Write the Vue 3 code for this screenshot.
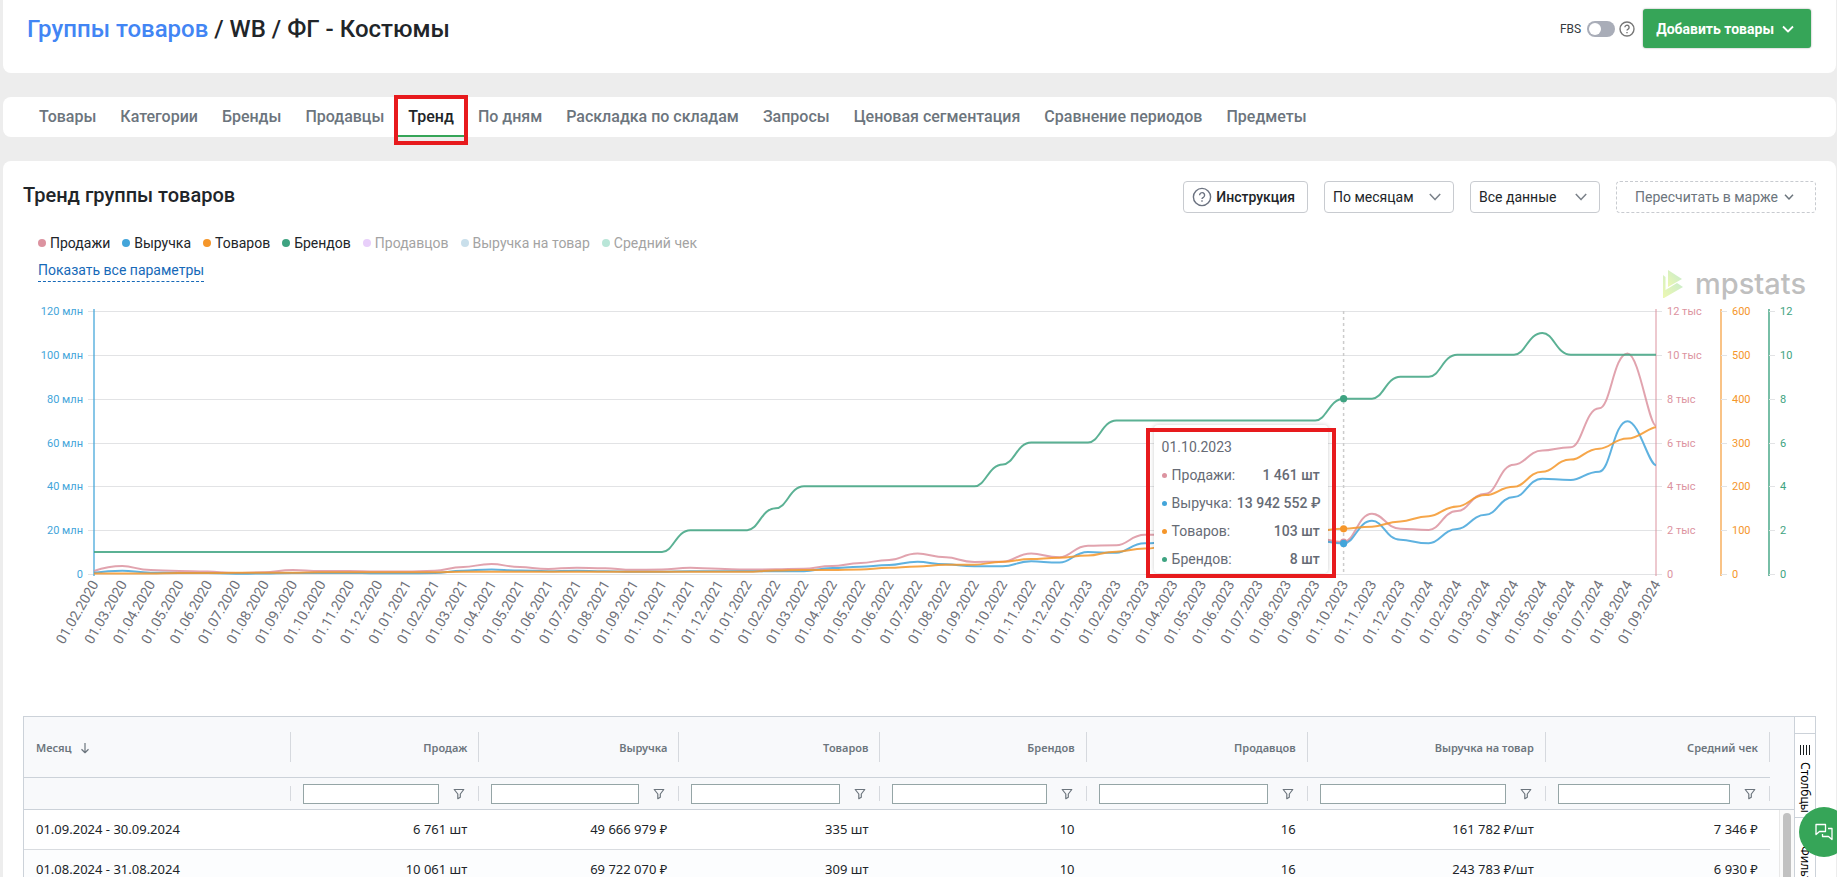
<template>
  <div class="page">
    <header class="card topbar">
      <h1 class="pageTitle"><a href="#groups">Группы товаров</a> / WB / ФГ - Костюмы</h1>
      <div class="topActions">
        <label class="fbs" for="fbs">
          <span>FBS</span>
          <input id="fbs" type="checkbox" v-model="fbs" />
        </label>
        <svg class="help" viewBox="0 0 16 16" width="16" height="16">
          <circle cx="8" cy="8" r="7" />
          <path d="M5.9 6.3a2.1 2.1 0 1 1 3.2 1.8c-.7.4-1.1.8-1.1 1.5M8 11.1v1.2" />
        </svg>
        <button type="button" class="addButton">
          Добавить товары
          <svg viewBox="0 0 12 8" width="12" height="8"><path d="M1 1.5 6 6.5 11 1.5" /></svg>
        </button>
      </div>
    </header>

    <nav class="card tabs">
      <a
        v-for="tab in tabs"
        :key="tab"
        href="#"
        :class="['tab', { active: tab === activeTab }]"
        @click.prevent="activeTab = tab"
      >
        {{ tab }}
        <i class="marker" v-if="tab === 'Тренд'"></i>
      </a>
    </nav>

    <main class="card content">
      <div class="contentHead">
        <h2>Тренд группы товаров</h2>
        <button type="button" class="control guide">
          <svg class="help" viewBox="0 0 20 20" width="20" height="20">
            <circle cx="10" cy="10" r="8.6" />
            <path d="M7.6 8.2a2.5 2.5 0 1 1 3.8 2.1c-.9.5-1.4.9-1.4 1.7M10 13.2v1.5" />
          </svg>
          Инструкция
        </button>
        <div class="selectBox">
          <select class="control" aria-label="Период" v-model="period">
            <option>По месяцам</option>
            <option>По неделям</option>
          </select>
          <svg viewBox="0 0 12 8" width="12" height="8"><path d="M.8 1 6 6.6 11.2 1" /></svg>
        </div>
        <div class="selectBox">
          <select class="control" aria-label="Данные" v-model="scope">
            <option>Все данные</option>
            <option>За год</option>
          </select>
          <svg viewBox="0 0 12 8" width="12" height="8"><path d="M.8 1 6 6.6 11.2 1" /></svg>
        </div>
        <button type="button" class="control margin">
          Пересчитать в марже
          <svg viewBox="0 0 10 8" width="10" height="8"><path d="M1 1.8 5 6 9 1.8" /></svg>
        </button>
      </div>

      <ul class="legend">
        <li v-for="item in legend" :key="item.label" :class="{ off: item.off }">
          <i :style="{ background: item.color }"></i>{{ item.label }}
        </li>
      </ul>
      <div class="showAll"><a href="#params">Показать все параметры</a></div>

      <div class="chart" ref="chartRef">
        <svg :width="width" height="400">
          <g class="gridLines">
            <line v-for="n in 7" :key="n" :x1="left - 6" :x2="right + 6" :y1="gridY(n)" :y2="gridY(n)" />
          </g>
          <line class="pointer" :x1="pointX(hover)" :x2="pointX(hover)" :y1="top" :y2="bottom" />
          <g v-for="axis in axes" :key="axis.color">
            <line
              :x1="axis.x"
              :x2="axis.x"
              :y1="top - 2"
              :y2="bottom + 2"
              :stroke="axis.color"
              :opacity="axis.opacity"
              stroke-width="1.4"
            />
            <template v-for="n in 7" :key="n">
              <line v-if="axis.ticks" class="tick" :x1="axis.x" :x2="axis.x + 6" :y1="gridY(n)" :y2="gridY(n)" />
              <text
                class="axisLabel"
                :x="axis.x + (axis.end ? -11 : 11)"
                :y="gridY(n) + 4"
                :fill="axis.color"
                :text-anchor="axis.end ? 'end' : 'start'"
              >{{ axisText(axis, n - 1) }}</text>
            </template>
          </g>
          <path v-for="s in series" :key="s.label" class="line" :d="linePath(s)" :stroke="s.color" />
          <circle v-for="s in series" :key="s.label" :cx="pointX(hover)" :cy="pointY(s, hover)" r="3.6" :fill="s.color" />
          <text
            v-for="(month, index) in months"
            :key="month"
            class="monthLabel"
            text-anchor="end"
            :transform="`translate(${pointX(index) + 5} ${bottom + 10}) rotate(-60)`"
          >{{ month }}</text>
        </svg>

        <div class="watermark">
          <svg viewBox="0 0 20 28" width="20" height="28">
            <defs>
              <linearGradient id="mark" x1="0" y1="1" x2="1" y2="0">
                <stop offset="0" stop-color="#edf8b0" />
                <stop offset="1" stop-color="#c3ead0" />
              </linearGradient>
            </defs>
            <path d="M5 0 19 9 5 17Z" fill="url(#mark)" />
            <path d="M0 5 2.500 7V20L14 13l6 4L1 28H0Z" fill="url(#mark)" />
          </svg>
          <span>mpstats</span>
        </div>

        <div class="tooltip" :style="{ left: pointX(hover) - 190 + 'px' }">
          <p>{{ months[hover] }}</p>
          <p v-for="row in tooltipRows" :key="row.label">
            <i :style="{ background: row.color }"></i>
            <span>{{ row.label }}:</span>
            <b>{{ row.value }}</b>
          </p>
          <div class="frame"></div>
        </div>
      </div>

      <div class="grid">
        <div class="gridMain">
          <table>
            <colgroup>
              <col v-for="col in columns" :key="col.label" :style="{ width: (col.width / 1769) * 100 + '%' }" />
              <col />
            </colgroup>
            <thead>
              <tr class="headRow">
                <th v-for="(col, index) in columns" :key="col.label" scope="col">
                  <div class="headCell">
                    {{ col.label }}
                    <svg v-if="index === 0" viewBox="0 0 10 12" width="10" height="12"><path d="M5 1v9.500M1.500 7.300 5 10.700 8.500 7.300" /></svg>
                  </div>
                </th>
                <td></td>
              </tr>
              <tr class="filterRow">
                <td v-for="(col, index) in columns" :key="col.label">
                  <div class="filterCell">
                    <template v-if="index > 0">
                      <input type="text" :aria-label="'Фильтр: ' + col.label" />
                      <button type="button" :aria-label="'Меню фильтра: ' + col.label">
                        <svg viewBox="0 0 12 12" width="12" height="12"><path d="M1.200 1.500h9.600L7.300 6v3.200L4.800 10.700V6Z" /></svg>
                      </button>
                    </template>
                  </div>
                </td>
                <td></td>
              </tr>
            </thead>
            <tbody>
              <tr v-for="row in rows" :key="row[0]">
                <td v-for="(cell, index) in row" :key="index">{{ cell }}</td>
                <td class="filler"></td>
              </tr>
            </tbody>
          </table>
          <div class="scrollbar"><i></i></div>
        </div>
        <aside class="sideBar">
          <button type="button">
            <svg viewBox="0 0 10 10" width="10" height="10"><path d="M.5 0v10M3.500 0v10M6.500 0v10M9.500 0v10" /></svg>
            Столбцы
          </button>
          <button type="button">
            <svg viewBox="0 0 10 10" width="10" height="10"><path d="M9 1v8L5 6H1V4h4Z" fill="none" /></svg>
            Фильтры
          </button>
        </aside>
      </div>
    </main>

    <button type="button" class="chat" aria-label="Чат">
      <svg viewBox="0 0 18 18" width="18" height="18">
        <path d="M1 1.500h9.500v7H4.500L1 11.500Z" />
        <path d="M13 5.500h4v11L13.500 13.500H7.500V11" />
      </svg>
    </button>
  </div>
</template>

<script setup>
import { computed, onBeforeUnmount, onMounted, ref } from 'vue';

const tabs = [
  'Товары',
  'Категории',
  'Бренды',
  'Продавцы',
  'Тренд',
  'По дням',
  'Раскладка по складам',
  'Запросы',
  'Ценовая сегментация',
  'Сравнение периодов',
  'Предметы',
];
const activeTab = ref('Тренд');
const fbs = ref(false);
const period = ref('По месяцам');
const scope = ref('Все данные');

const legend = [
  { label: 'Продажи', color: '#dc93a0' },
  { label: 'Выручка', color: '#43a5da' },
  { label: 'Товаров', color: '#f5962a' },
  { label: 'Брендов', color: '#3ea381' },
  { label: 'Продавцов', color: '#e8cffa', off: true },
  { label: 'Выручка на товар', color: '#c9dfeb', off: true },
  { label: 'Средний чек', color: '#b9e6d8', off: true },
];

// monthly values, february 2020 - september 2024
const series = [
  {
    label: 'Продажи',
    color: '#dc93a0',
    max: 12000,
    data: [
      140, 365, 180, 140, 110, 45, 75, 185, 140, 140, 110, 110, 150, 320, 455, 320, 230, 290, 265,
      190, 200, 280, 240, 200, 215, 245, 365, 500, 640, 930, 760, 550, 560, 940, 760, 1290, 1310,
      1790, 1780, 1600, 1500, 1500, 1600, 1650, 1461, 2750, 2070, 2010, 2870, 3665, 4990, 5630,
      5780, 7560, 10061, 6761,
    ],
  },
  {
    label: 'Брендов',
    color: '#3ea381',
    max: 12,
    data: [
      1, 1, 1, 1, 1, 1, 1, 1, 1, 1, 1, 1, 1, 1, 1, 1, 1, 1, 1, 1, 1, 2, 2, 2, 3, 4, 4, 4, 4, 4, 4, 4,
      5, 6, 6, 6, 7, 7, 7, 7, 7, 7, 7, 7, 8, 8, 9, 9, 10, 10, 10, 11, 10, 10, 10, 10,
    ],
  },
  {
    label: 'Выручка',
    color: '#43a5da',
    max: 120,
    data: [
      0.6, 1.5, 0.6, 0.5, 0.5, 0.1, 0.2, 0.5, 0.5, 0.5, 0.3, 0.3, 0.5, 1.5, 2.1, 1.6, 1.3, 1.5, 1.3,
      1, 1, 1.2, 1.2, 1.2, 1.2, 1.3, 2.7, 3.3, 4.1, 5.6, 4.4, 3.5, 3.5, 5.8, 5.2, 10, 9.7, 14, 14.5,
      14, 13, 13, 14, 15.4, 13.94, 24.3, 15.6, 14, 20.5, 27, 35.1, 43.5, 42.9, 46.7, 69.72, 49.67,
    ],
  },
  {
    label: 'Товаров',
    color: '#f5962a',
    max: 600,
    data: [
      1, 1, 1, 2, 2, 3, 3, 3, 4, 4, 4, 4, 4, 5, 5, 5, 5, 5, 5, 5, 5, 5, 5, 5, 8, 9, 9, 10, 14, 17, 21,
      21, 28, 34, 37, 42, 51, 58, 64, 70, 78, 85, 92, 98, 103, 108, 120, 132, 154, 180, 199, 233,
      261, 286, 309, 335,
    ],
  },
];

const months = Array.from({ length: 56 }, (_, i) => {
  const month = String(((i + 1) % 12) + 1).padStart(2, '0');
  return `01.${month}.${2020 + Math.floor((i + 1) / 12)}`;
});

const hover = 44;
const tooltipRows = [
  { label: 'Продажи', value: '1 461 шт', color: '#dc93a0' },
  { label: 'Выручка', value: '13 942 552 ₽', color: '#43a5da' },
  { label: 'Товаров', value: '103 шт', color: '#f5962a' },
  { label: 'Брендов', value: '8 шт', color: '#3ea381' },
];

const chartRef = ref();
const width = ref(1793);
const top = 29;
const bottom = 292;
const left = 71;
const right = computed(() => width.value - 160);

const axes = computed(() => [
  { x: left, color: '#43a5da', step: 20, suffix: ' млн', end: true, opacity: 0.9 },
  { x: right.value, color: '#dc93a0', step: 2, suffix: ' тыс', opacity: 0.7 },
  { x: right.value + 65, color: '#f5962a', step: 100, suffix: '', ticks: true, opacity: 0.8 },
  { x: right.value + 113, color: '#3ea381', step: 2, suffix: '', ticks: true, opacity: 1 },
]);

const axisText = (axis, n) => (n === 0 ? '0' : n * axis.step + axis.suffix);
const gridY = (n) => Math.round(bottom - ((n - 1) * (bottom - top)) / 6);
const pointX = (i) => left + (i * (right.value - left)) / (months.length - 1);
const pointY = (s, i) => bottom - (s.data[i] / s.max) * (bottom - top);

// horizontal tangents at every point keep the curve monotone between months
const linePath = (s) => {
  const step = pointX(1) - pointX(0);
  const last = s.data.length - 1;
  let d = `M${pointX(0)} ${pointY(s, 0)}`;
  for (let i = 1; i <= last; i++) {
    const c1 = pointX(i - 1) + (i === 1 ? 0 : step * 0.4);
    const c2 = pointX(i) - step * (i === last ? 0.25 : 0.5);
    d += `C${c1} ${pointY(s, i - 1)} ${c2} ${pointY(s, i)} ${pointX(i)} ${pointY(s, i)}`;
  }
  return d;
};

const columns = [
  { label: 'Месяц', width: 267 },
  { label: 'Продаж', width: 188 },
  { label: 'Выручка', width: 200 },
  { label: 'Товаров', width: 201 },
  { label: 'Брендов', width: 206 },
  { label: 'Продавцов', width: 221 },
  { label: 'Выручка на товар', width: 238 },
  { label: 'Средний чек', width: 224 },
];

const rows = [
  ['01.09.2024 - 30.09.2024', '6 761 шт', '49 666 979 ₽', '335 шт', '10', '16', '161 782 ₽/шт', '7 346 ₽'],
  ['01.08.2024 - 31.08.2024', '10 061 шт', '69 722 070 ₽', '309 шт', '10', '16', '243 783 ₽/шт', '6 930 ₽'],
];

const measure = () => {
  width.value = chartRef.value.clientWidth;
};

onMounted(() => {
  measure();
  window.addEventListener('resize', measure);
});

onBeforeUnmount(() => window.removeEventListener('resize', measure));
</script>

<style>
body {
  background: #ededed;
}
</style>

<style scoped>
* {
  box-sizing: border-box;
}

.page {
  position: relative;
  height: 100vh;
  overflow: hidden;
  display: flex;
  flex-direction: column;
  gap: 24px;
  padding: 0 1px 0 3px;
  background: #ededed;
  color: #212529;
  font: 14px/20px Roboto, sans-serif;
}

button,
input,
select {
  font: inherit;
  color: inherit;
  margin: 0;
}

button {
  cursor: pointer;
}

svg {
  flex: none;
}

svg path,
svg circle {
  stroke-linejoin: round;
}

.card {
  flex: none;
  background: #fff;
  border-radius: 8px;
}

.topbar {
  display: flex;
  justify-content: space-between;
  align-items: flex-start;
  height: 73px;
  padding: 9px 25px 0 24px;
  border-radius: 0 0 8px 8px;
}

.pageTitle {
  margin: 0;
  font-size: 24px;
  line-height: 40px;
  font-weight: 500;
}

.pageTitle a {
  color: #4285f4;
  text-decoration: none;
}

.topActions {
  display: flex;
  align-items: center;
}

.fbs {
  display: flex;
  align-items: center;
  gap: 6px;
  font-size: 12px;
  color: #343a40;
}

.fbs input {
  appearance: none;
  position: relative;
  width: 28px;
  height: 16px;
  border-radius: 8px;
  background: #a9adb8;
}

.fbs input::before {
  content: '';
  position: absolute;
  left: 2px;
  top: 2px;
  width: 12px;
  height: 12px;
  border-radius: 50%;
  background: #fff;
}

.help {
  fill: none;
  stroke: #6b7280;
  stroke-width: 1.4;
}

.topbar .help {
  margin: 0 8px 0 4px;
  stroke: #777;
}

.addButton {
  display: flex;
  align-items: center;
  gap: 8px;
  height: 39px;
  padding: 0 17px 0 13px;
  border: 0;
  border-radius: 3px;
  background: #36a558;
  box-shadow: 0 0 2px rgba(0, 0, 0, 0.4);
  color: #fff;
  font-weight: 700;
}

.addButton svg {
  fill: none;
  stroke: #fff;
  stroke-width: 1.8;
}

.tabs {
  display: flex;
  height: 40px;
  padding: 0 24px;
}

.tab {
  position: relative;
  padding: 0 12px;
  border-bottom: 2px solid transparent;
  color: #6c757d;
  font-size: 16px;
  font-weight: 500;
  line-height: 40px;
  text-decoration: none;
}

.tab.active {
  color: #212529;
  border-bottom-color: #36a558;
}

.marker {
  position: absolute;
  inset: -2px -2px -10px;
  border: 4px solid #e71a1d;
}

.content {
  padding: 20px;
}

.contentHead {
  display: flex;
  gap: 16px;
}

.contentHead h2 {
  flex: 1;
  margin: 0;
  font-size: 20px;
  line-height: 28px;
  font-weight: 500;
}

.control {
  height: 32px;
  border: 1px solid #c8cbd0;
  border-radius: 4px;
  background: #fff;
}

.guide {
  display: flex;
  align-items: center;
  gap: 4px;
  padding: 0 12px 0 8px;
  font-weight: 500;
}

.selectBox {
  position: relative;
  display: flex;
  align-items: center;
}

.selectBox select {
  appearance: none;
  width: 130px;
  padding: 0 32px 0 8px;
}

.selectBox svg {
  position: absolute;
  right: 13px;
  pointer-events: none;
}

.selectBox svg,
.margin svg {
  fill: none;
  stroke: #7b828a;
  stroke-width: 1.5;
}

.margin {
  display: flex;
  align-items: center;
  justify-content: center;
  gap: 6px;
  width: 200px;
  padding: 0 8px 0 5px;
  border-style: dashed;
  color: #6c757d;
}

.margin svg {
  stroke: #6c757d;
}

.legend {
  display: flex;
  flex-wrap: wrap;
  gap: 12px;
  margin: 20px 0 6px;
  padding: 0 0 0 15px;
  list-style: none;
}

.legend li {
  display: flex;
  align-items: center;
  gap: 4px;
}

.legend li i {
  width: 8px;
  height: 8px;
  border-radius: 50%;
}

.legend .off {
  color: #a3a3a3;
}

.showAll {
  display: flex;
  padding-left: 15px;
}

.showAll a {
  border-bottom: 1px dashed #1669b8;
  color: #1669b8;
  line-height: 22px;
  text-decoration: none;
}

.chart {
  position: relative;
  height: 434px;
}

.chart > svg {
  display: block;
}

.gridLines line,
.tick {
  stroke: #e2e3e5;
  shape-rendering: crispEdges;
}

.pointer {
  stroke: #ccc;
  stroke-width: 1.5;
  stroke-dasharray: 3 3;
}

.line {
  fill: none;
  stroke-width: 2;
  opacity: 0.85;
}

.axisLabel {
  font-size: 11px;
}

.monthLabel {
  font-size: 14px;
  fill: #6e7079;
}

.watermark {
  position: absolute;
  top: -12px;
  right: 10px;
  display: flex;
  align-items: center;
  gap: 12px;
  color: #bfbfbf;
  font: 500 29px/28px Inter, sans-serif;
}

.tooltip {
  position: absolute;
  top: 143px;
  width: 174px;
  padding: 8px 8px 0;
  border-radius: 4px;
  background: #fff;
  box-shadow: 0 0 4px rgba(0, 0, 0, 0.2);
  color: #666b75;
}

.tooltip p {
  display: flex;
  align-items: center;
  gap: 5px;
  margin: 0;
  line-height: 28px;
  white-space: nowrap;
}

.tooltip p i {
  flex: none;
  width: 5px;
  height: 5px;
  border-radius: 50%;
}

.tooltip p b {
  margin-left: auto;
  font-weight: 500;
}

.frame {
  position: absolute;
  inset: 3px -8px -5px;
  border: 4px solid #e71a1d;
}

.grid {
  display: flex;
  border: 1px solid #ccd2d9;
  color: #212529;
  font: 13px/20px 'Noto Sans', sans-serif;
}

.gridMain {
  position: relative;
  flex: 1;
}

table {
  width: 100%;
  table-layout: fixed;
  border-collapse: separate;
  border-spacing: 0;
}

th,
td {
  padding: 0;
}

thead {
  background: #f8f9fb;
}

.headRow > * {
  height: 61px;
}

.headRow th {
  border-bottom: 1px solid #ccd2d9;
}

.headCell {
  display: flex;
  align-items: center;
  justify-content: flex-end;
  height: 30px;
  padding: 2px 11px 0 0;
  border-right: 1px solid #d6d9de;
  color: #6c757d;
  font-size: 11px;
  font-weight: 600;
}

.headRow th:first-child .headCell {
  justify-content: flex-start;
  gap: 8px;
  padding-left: 12px;
}

.headCell svg,
.filterCell svg {
  fill: none;
  stroke: #6c757d;
  stroke-width: 1.2;
}

.filterRow td {
  height: 32px;
  border-bottom: 1px solid #ccd2d9;
}

.filterCell {
  position: relative;
  display: flex;
  align-items: center;
  height: 20px;
  padding: 0 12px;
  gap: 12px;
}

.filterCell::after {
  content: '';
  position: absolute;
  right: 0;
  top: 2px;
  height: 15px;
  border-right: 1px solid #d6d9de;
}

.filterCell input {
  flex: 1;
  min-width: 0;
  height: 20px;
  padding: 0 4px;
  border: 1px solid #95a5a6;
  background: #fff;
}

.filterCell button {
  display: flex;
  padding: 0 2px;
  border: 0;
  background: none;
}

tbody td {
  height: 40px;
  padding: 0 12px 2px;
  border-bottom: 1px solid #d9dce0;
  text-align: right;
  white-space: nowrap;
}

tbody td:first-child {
  text-align: left;
}

tbody tr:nth-child(even) {
  background: #fcfdfe;
}

tbody .filler {
  border: 0;
}

.scrollbar {
  position: absolute;
  right: 0;
  top: 93px;
  bottom: 0;
  width: 15px;
  padding: 3px;
  border-left: 1px solid #e8e8e8;
  background: #fafafa;
}

.scrollbar i {
  display: block;
  width: 8px;
  height: 200px;
  border-radius: 4px;
  background: #c1c1c1;
}

.sideBar {
  width: 21px;
  padding-top: 16px;
  border-left: 1px solid #ccd2d9;
}

.sideBar button {
  display: flex;
  align-items: center;
  gap: 7px;
  width: 20px;
  height: 84px;
  padding: 11px 0 0;
  border: 0;
  border-top: 1px solid #ccd2d9;
  background: #fff;
  color: #000;
  font-size: 12px;
  writing-mode: vertical-rl;
  line-height: 20px;
}

.sideBar svg path {
  stroke: #181d1f;
}

.chat {
  position: absolute;
  right: -12px;
  top: 807px;
  display: flex;
  align-items: center;
  justify-content: center;
  width: 50px;
  height: 50px;
  padding: 0;
  border: 0;
  border-radius: 50%;
  background: #36a558;
}

.chat svg {
  fill: none;
  stroke: #fff;
  stroke-width: 1.3;
}
</style>
